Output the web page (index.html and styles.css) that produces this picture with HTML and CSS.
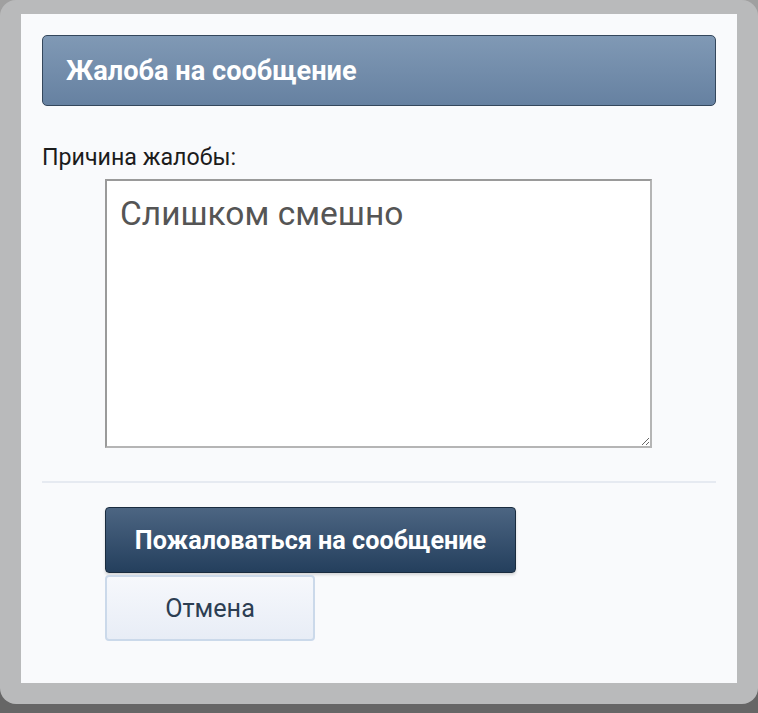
FILE: index.html
```html
<!DOCTYPE html>
<html lang="ru">
<head>
<meta charset="utf-8">
<link rel="stylesheet" href="styles.css">
</head>
<body>
<div class="frame">
  <div class="panel">
    <div class="header">Жалоба на сообщение</div>
    <div class="label">Причина жалобы:</div>
    <textarea class="reason">Слишком смешно</textarea>
    <div class="sep"></div>
    <div class="actions">
      <button class="btn-primary">Пожаловаться на сообщение</button>
      <button class="btn-cancel">Отмена</button>
    </div>
  </div>
</div>
</body>
</html>
```
FILE: styles.css
```css
html, body {
  margin: 0;
  padding: 0;
  height: 713px;
  overflow: hidden;
}
body {
  background: linear-gradient(#a0a0a0 0, #a0a0a0 30px, #666 680px);
  font-family: Roboto, "Noto Sans", sans-serif;
}
.frame {
  background: #b9babb;
  border-radius: 16px;
  padding: 14px 21px 21px 21px;
  height: 669px;
}
.panel {
  background: #f9fafc;
  height: 648px;
  padding: 21px 21px 0 21px;
  display: flex;
  flex-direction: column;
  align-items: flex-start;
}
.header {
  box-sizing: border-box;
  width: 674px;
  height: 71px;
  border: 1.5px solid #34475c;
  border-radius: 5px;
  background: linear-gradient(#8099b5, #6681a1);
  color: #fff;
  font-weight: 700;
  font-size: 27.2px;
  display: flex;
  align-items: center;
  padding-left: 23px;
}
.label {
  margin-top: 37px;
  font-size: 23.2px;
  color: #1c1c1c;
  line-height: 28px;
}
.reason {
  box-sizing: border-box;
  margin: 8px 0 0 63px;
  width: 547px;
  height: 269px;
  border: 2px solid #a0a0a0;
  border-color: #9a9a9a #b5b5b5 #b5b5b5 #9a9a9a;
  background: #fff;
  font-family: Roboto, "Noto Sans", sans-serif;
  font-size: 33.5px;
  color: #555;
  padding: 13px 13px;
  line-height: 40px;
  resize: both;
  outline: none;
}
.sep {
  width: 674px;
  height: 2px;
  background: #e6eaf1;
  margin-top: 33px;
}
.actions {
  margin: 24px 0 0 63px;
  display: flex;
  flex-direction: column;
  align-items: flex-start;
  gap: 2px;
}
.btn-primary {
  box-sizing: border-box;
  width: 411px;
  height: 66px;
  border: 1.5px solid #1a2c3f;
  border-radius: 4px;
  background: linear-gradient(#4c6582, #243f5d);
  color: #fff;
  font-family: Roboto, "Noto Sans", sans-serif;
  font-weight: 700;
  font-size: 25.2px;
  box-shadow: 0 2px 3px rgba(0,0,0,0.15);
  padding: 0;
}
.btn-cancel {
  box-sizing: border-box;
  width: 210px;
  height: 66px;
  border: 2px solid #cbd9ea;
  border-radius: 4px;
  background: linear-gradient(#f6f8fc, #e8edf6);
  color: #2c3e52;
  font-family: Roboto, "Noto Sans", sans-serif;
  font-size: 25.2px;
  padding: 0;
}
```
